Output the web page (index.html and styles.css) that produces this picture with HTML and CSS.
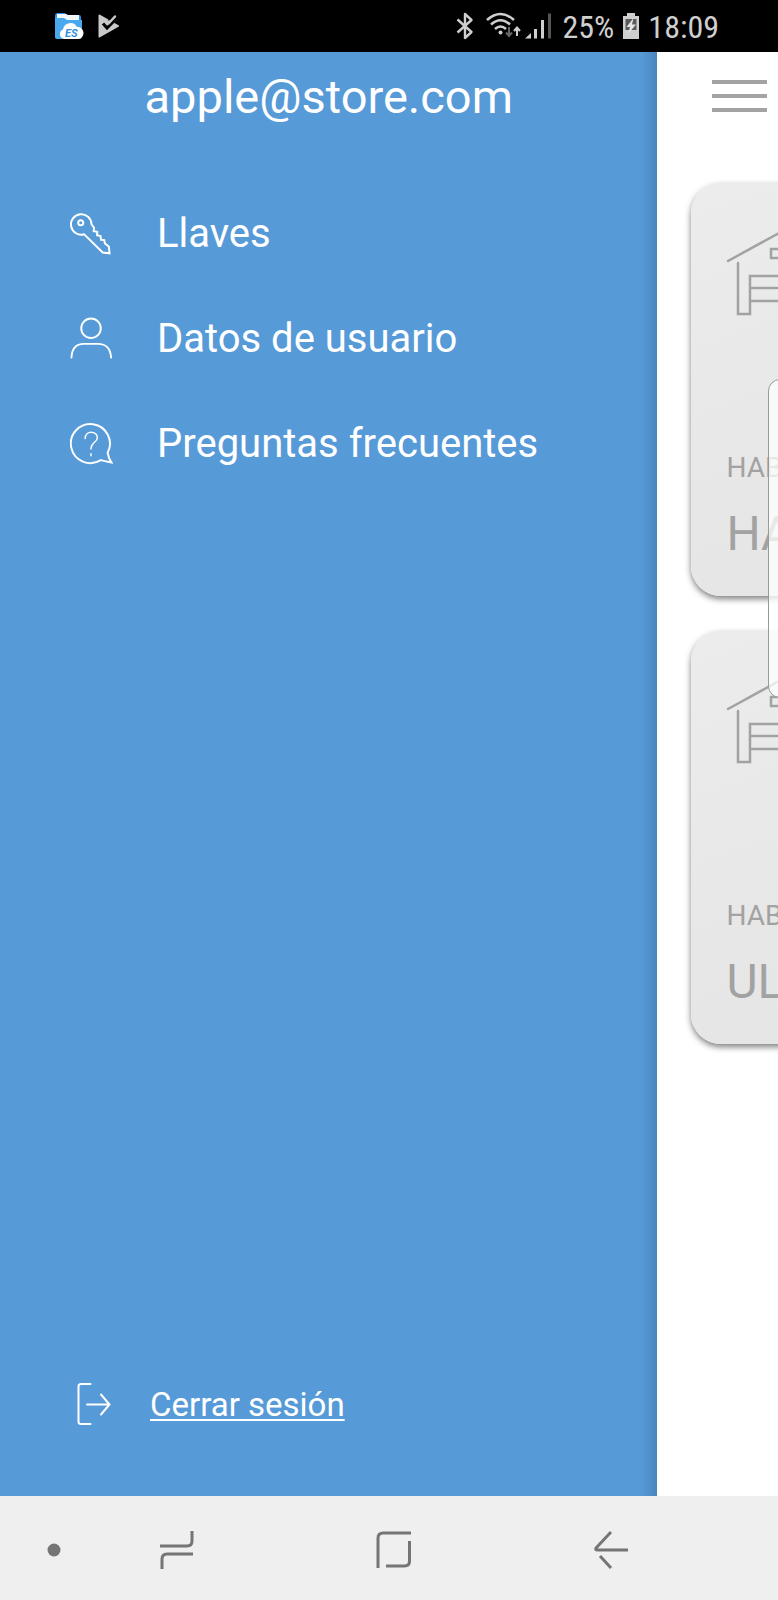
FILE: index.html
```html
<!DOCTYPE html>
<html lang="es">
<head>
<meta charset="utf-8">
<meta name="viewport" content="width=device-width, initial-scale=1">
<title>Llaves</title>
<link rel="stylesheet" href="styles.css">
</head>
<body>
<div class="screen">
  <header class="status">
    <div class="status-group notifications">
      <svg width="30" height="28" viewBox="0 0 30 28" aria-hidden="true">
        <path d="M1 4a3 3 0 0 1 3-3h7l2 2h12a2 2 0 0 1 2 2v19a3 3 0 0 1-3 3H4a3 3 0 0 1-3-3z" fill="#2f8fe0"/>
        <path d="M3 2h9l2 1h11v5H3z" fill="#f4f9ff"/>
        <path d="M1 6h9l3 2h15v16a3 3 0 0 1-3 3H3a2 2 0 0 1-2-2z" fill="#4aa9ee"/>
        <path d="M10 27a5 5 0 0 1-1-9.500 7.500 7.500 0 0 1 14-2.500 6 6 0 0 1 1 12z" fill="#fff"/>
        <text class="es-mark" x="11" y="25">ES</text>
      </svg>
      <svg width="22" height="24" viewBox="0 0 22 24" aria-hidden="true">
        <path d="M1.500 1.500 20 12 1.500 22.500z" fill="#c9c9c9" stroke="#c9c9c9" stroke-width="2" stroke-linejoin="round"/>
        <path d="M9.500 6.500 15 1v5z" fill="#000"/>
        <path d="m5 9.500 4 4.500 8.500-8.500" fill="none" stroke="#000" stroke-width="3"/>
        <path d="M10.500 9.500 17 2.500" fill="none" stroke="#c9c9c9" stroke-width="2.500" stroke-linecap="round"/>
      </svg>
    </div>
    <div class="status-group">
      <svg width="18" height="28" viewBox="0 0 18 28" fill="none" stroke="#cfcfcf" stroke-width="2.400" stroke-linejoin="round" aria-hidden="true">
        <path d="M1.500 7.500 15.500 20 9 26V2l6.500 6L1.500 20.500"/>
      </svg>
      <svg class="wifi" width="35" height="28" viewBox="0 0 35 28" fill="none" stroke="#cfcfcf" stroke-width="2.600" aria-hidden="true">
        <path d="M1 8Q14.500-4 28 8M5 12.500q9.500-8.500 19 0M9 17q5.500-5 11 0"/>
        <circle cx="14.500" cy="20.500" r="2" fill="#cfcfcf" stroke="none"/>
        <path d="M23 15v9m-3-3.500 3 3.500 3-3.500" stroke="#666" stroke-width="2"/>
        <path d="M31 24v-8m-3 3 3-3.500 3 3.500" stroke-width="2"/>
      </svg>
      <svg class="signal" width="28" height="28" viewBox="0 0 28 28" fill="#cfcfcf" aria-hidden="true">
        <path d="M0 26.500h6V21zM9 17h3v9.500H9zM16 8h3v18.500h-3z"/>
        <path d="M23 1.500h3v25h-3z" fill="#555"/>
      </svg>
      <span class="status-text">25%</span>
      <svg class="battery" width="18" height="28" viewBox="0 0 18 28" aria-hidden="true">
        <path d="M5 1h8v3h4v23H1V4h4z" fill="#cfcfcf"/>
        <path d="M3.500 7h11v11h-11z" fill="#5a5a5a"/>
        <path d="m11.500 6-7 9H8l-2 7 8-9.500h-4z" fill="#e4e4e4"/>
      </svg>
      <span class="status-text">18:09</span>
    </div>
  </header>

  <main class="stage">
    <aside class="drawer">
      <h1 class="account">apple@store.com</h1>
      <nav class="menu">
        <a class="menu-item" href="#llaves">
          <svg class="menu-icon" width="43" height="43" viewBox="0 0 44 44" aria-hidden="true">
            <path d="M22 12.500a10.500 10.500 0 1 0-7.500 10.300L33.500 41.500l7 .8-.8-7-4-3-.6-3.500-3.300-.4-.6-3.900-3.500-.8.200-3.500-3.700-.5.400-3.600z"/>
            <circle cx="11" cy="11" r="2.600"/>
          </svg>
          <span>Llaves</span>
        </a>
        <a class="menu-item" href="#datos">
          <svg class="menu-icon" width="43" height="43" viewBox="0 0 44 44" aria-hidden="true">
            <circle cx="21.500" cy="11.500" r="10"/>
            <path d="M1.500 41.500C2 32 7 27.500 14 27.500h15c7 0 12.500 4.500 13 14"/>
          </svg>
          <span>Datos de usuario</span>
        </a>
        <a class="menu-item" href="#preguntas">
          <svg class="menu-icon" width="43" height="43" viewBox="0 0 44 44" aria-hidden="true">
            <path d="M38.500 31.500a20 20 0 1 0-7 7.500q5 1.500 11 2.500-3-4-4-10z"/>
            <path class="thin" d="M15.500 17c0-9 12.500-8 12.500-1 0 5-6.500 5-6.500 10.500v1M21.500 32.500v2"/>
          </svg>
          <span>Preguntas frecuentes</span>
        </a>
      </nav>
      <a class="logout" href="#salir">
        <svg class="menu-icon" width="36" height="44" viewBox="0 0 36 44" aria-hidden="true">
          <path d="M13.500 2H4Q1.500 2 1.500 4.500v35Q1.500 42 4 42h9.500M10 22.500h22.500M24 12.500l8.500 10-8.500 10"/>
        </svg>
        <span class="logout-label">Cerrar sesión</span>
      </a>
    </aside>

    <section class="app">
      <button class="hamburger" type="button" aria-label="Menú">
        <span class="bar"></span><span class="bar"></span><span class="bar"></span>
      </button>
      <article class="card">
        <svg class="garage" width="128" height="96" viewBox="0 0 128 96" aria-hidden="true">
          <path d="M2 37 64 3l62 34M12 39v51h12V52h80v38h12V39M24 64h80M24 77h80M45 25h38v9H45z"/>
        </svg>
        <p class="card-kind">HAB</p>
        <h2 class="card-name">HA</h2>
      </article>
      <article class="card">
        <svg class="garage" width="128" height="96" viewBox="0 0 128 96" aria-hidden="true">
          <path d="M2 37 64 3l62 34M12 39v51h12V52h80v38h12V39M24 64h80M24 77h80M45 25h38v9H45z"/>
        </svg>
        <p class="card-kind">HAB</p>
        <h2 class="card-name">UL</h2>
      </article>
    </section>
    <div class="edge-handle"></div>
  </main>

  <footer class="navbar">
    <button class="nav-button" type="button" aria-label="Mostrar barra">
      <svg width="14" height="14" viewBox="0 0 14 14" aria-hidden="true"><circle cx="7" cy="7" r="6.500" fill="#757575"/></svg>
    </button>
    <button class="nav-button" type="button" aria-label="Recientes">
      <svg class="nav-icon" width="36" height="40" viewBox="0 0 36 40" aria-hidden="true">
        <path d="M33 1v10q0 5-5 5H1M34 24H8q-5 0-5 5v10"/>
      </svg>
    </button>
    <button class="nav-button" type="button" aria-label="Inicio">
      <svg class="nav-icon" width="36" height="38" viewBox="0 0 36 38" aria-hidden="true">
        <path d="M2 37V7q0-5 5-5H35M33.500 10v20q0 5-5 5H10"/>
      </svg>
    </button>
    <button class="nav-button" type="button" aria-label="Atrás">
      <svg class="nav-icon" width="36" height="40" viewBox="0 0 36 40" aria-hidden="true">
        <path d="M18 2 3 18q-1 2 1.500 2H35M7 26l11 12"/>
      </svg>
    </button>
  </footer>
</div>
</body>
</html>
```
FILE: styles.css
```css
* {
  box-sizing: border-box;
}

body {
  margin: 0;
  font-family: Roboto, "Liberation Sans", sans-serif;
  background: #fff;
}

h1, h2, p {
  margin: 0;
  font-weight: 400;
}

button {
  padding: 0;
  border: 0;
  background: none;
}

.screen {
  display: grid;
  grid-template-rows: auto 1fr auto;
  min-height: 100vh;
}

.status {
  display: flex;
  justify-content: space-between;
  height: 52px;
  padding: 0 59px 0 54px;
  background: #000;
  color: #cfcfcf;
}

.status-group {
  display: flex;
  align-items: center;
}

.notifications {
  gap: 14px;
}

.es-mark {
  font: italic 700 11px Roboto, sans-serif;
  fill: #2f8fe0;
}

.wifi {
  margin-left: 12px;
}

.signal {
  margin: 0 10px 0 4px;
}

.battery {
  margin: 0 8px;
}

.status-text {
  padding-top: 2px;
  font-family: "Roboto Condensed", Roboto, sans-serif;
  font-size: 32px;
  line-height: 50px;
}

.stage {
  position: relative;
  display: flex;
  overflow: hidden;
}

.drawer {
  flex: 0 0 auto;
  display: flex;
  flex-direction: column;
  width: 84.5%;
  padding: 17px 0 67px;
  color: #fff;
  background: linear-gradient(to left, #4a85bf, #579ad8 16px);
}

.account {
  font-size: 47px;
  line-height: 56px;
  text-align: center;
}

.menu {
  display: flex;
  flex-direction: column;
  margin-top: 56px;
}

.menu-item {
  display: flex;
  align-items: center;
  gap: 44px;
  height: 105px;
  padding-left: 70px;
  color: inherit;
  font-size: 40px;
  line-height: 48px;
  text-decoration: none;
}

.menu-icon {
  flex: none;
  fill: none;
  stroke: #fff;
  stroke-width: 2;
  stroke-linecap: round;
}

.thin {
  stroke-width: 1.5;
}

.logout {
  display: flex;
  align-items: center;
  gap: 37px;
  margin-top: auto;
  padding-left: 77px;
  color: inherit;
  font-size: 33px;
  line-height: 48px;
  text-decoration: none;
}

.logout-label {
  padding-top: 2px;
  text-decoration: underline;
  text-decoration-thickness: 2px;
  text-underline-offset: 3px;
  text-decoration-skip-ink: none;
}

.app {
  flex: 0 0 100%;
  display: flex;
  flex-direction: column;
  gap: 35px;
  padding: 28px 34px 0;
}

.hamburger {
  display: flex;
  flex-direction: column;
  gap: 10px;
  width: 55px;
  margin: 0 0 36px 21px;
}

.bar {
  width: 100%;
  height: 4px;
  background: #a3a3a3;
}

.card {
  padding: 41px 35px 34px;
  border-radius: 30px;
  color: #a2a2a2;
  background: linear-gradient(160deg, #ececec, #e2e2e2);
  box-shadow: 0 3px 6px rgba(0, 0, 0, 0.5);
}

.garage {
  display: block;
  fill: none;
  stroke: #a2a2a2;
  stroke-width: 2.5;
  stroke-linecap: round;
}

.card-kind {
  margin-top: 130px;
  font-size: 28px;
  line-height: 36px;
}

.card-name {
  margin-top: 20px;
  font-size: 48px;
  line-height: 56px;
}

.edge-handle {
  position: absolute;
  top: 327px;
  right: -20px;
  width: 30px;
  height: 319px;
  border: 1px solid #999;
  border-radius: 12px;
  background: rgba(255, 255, 255, 0.75);
}

.navbar {
  display: grid;
  grid-template-columns: 28px 1fr 1fr 1fr;
  height: 104px;
  padding: 3px 58px 0 40px;
  background: #efefef;
}

.nav-button {
  display: flex;
  align-items: center;
  justify-content: center;
}

.nav-icon {
  fill: none;
  stroke: #757575;
  stroke-width: 3;
}
```
